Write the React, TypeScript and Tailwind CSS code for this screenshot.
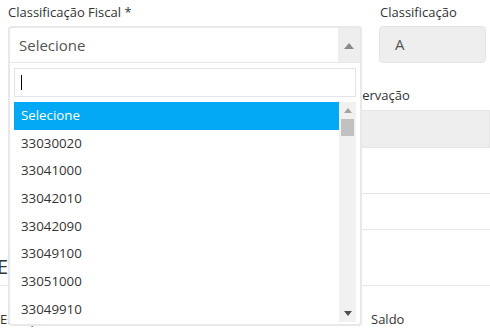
import React from "react";

const options = [
  "Selecione",
  "33030020",
  "33041000",
  "33042010",
  "33042090",
  "33049100",
  "33051000",
  "33049910",
];

export default function App() {
  return (
    <div className="relative w-[490px] h-[333px] overflow-hidden bg-white font-['Open_Sans',sans-serif] text-[#333]">
      {/* Background form */}
      <div className="flex flex-col pt-[3px]">
        {/* Row 1 */}
        <div className="flex pl-2">
          <div className="w-[354px] flex flex-col">
            <div className="h-[18px] leading-[18px] text-[13px] mb-[5px]">Classificação Fiscal *</div>
            <div className="h-[37px] flex border-2 border-b-0 border-[#e6e8eb] rounded-t-[4px] bg-white">
              <div className="flex-1 pl-[9px] flex items-center text-[15px] text-[#555]">Selecione</div>
              <div className="w-[22px] bg-[#eeeeee] flex items-center justify-center">
                <svg width="10" height="6" viewBox="0 0 10 6"><path d="M0 6 L5 0 L10 6 Z" fill="#8a8a8a" /></svg>
              </div>
            </div>
          </div>
          <div className="ml-[17px] w-[107px] flex flex-col">
            <div className="h-[18px] leading-[18px] text-[13px] mb-[5px] pl-px">Classificação</div>
            <div className="h-[37px] rounded-[4px] bg-[#eeeeee] border border-[#e4e4e4] pl-[15px] flex items-center text-[15px] text-[#555]">A</div>
          </div>
        </div>
        {/* Row 2 */}
        <div className="flex mt-[23px]">
          <div className="w-[337px] shrink-0" />
          <div className="flex-1 flex flex-col">
            <div className="h-[18px] leading-[18px] text-[13px] mb-[6px] pl-[1px]">Observação</div>
            <div className="h-[38px] bg-[#eeeeee] border border-[#e4e6e9]" />
            <div className="h-[46px] border-b border-[#e4e6e9]" />
            <div className="h-[36px] border-b border-[#e4e6e9]" />
          </div>
        </div>
        <div className="h-[56px] border-b border-[#e4e6e9] flex items-end pb-[6px]">
          <span className="text-[20px] leading-[24px] -ml-[3px] text-[#333]">Estoque</span>
        </div>
        <div className="flex items-center h-[30px] text-[13px] mt-[19px]">
          <span className="w-[371px] shrink-0">Estoque:</span>
          <span>Saldo</span>
        </div>
      </div>

      {/* Dropdown overlay */}
      <div className="absolute left-2 top-[62px] w-[354px] h-[264px] bg-white border-2 border-t-0 border-[#e6e8eb] rounded-b-[4px] flex flex-col">
        <div className="h-px bg-[#e6e8eb] -mx-[2px]" />
        <div className="px-1 pt-[5px]">
          <div className="h-[29px] border border-[#e2e4e7] flex items-center pl-[6px]">
            <div className="w-px h-[15px] bg-black" />
          </div>
        </div>
        <div className="mx-1 mt-[5px] h-[220px] flex overflow-hidden">
          <div className="flex-1 flex flex-col overflow-hidden">
            {options.map((o, i) => (
              <div
                key={o}
                className={
                  "h-[27.7px] shrink-0 flex items-center pl-[7px] text-[13.3px] " +
                  (i === 0 ? "bg-[#03a9f4] text-white" : "text-[#333]")
                }
              >
                {o}
              </div>
            ))}
          </div>
          <div className="w-[17px] bg-[#f1f1f1] flex flex-col items-center">
            <div className="h-[17px] flex items-center justify-center">
              <svg width="8" height="5" viewBox="0 0 8 5"><path d="M0 5 L4 0 L8 5 Z" fill="#a3a3a3" /></svg>
            </div>
            <div className="w-[13px] h-[17px] bg-[#c1c1c1]" />
            <div className="flex-1" />
            <div className="h-[17px] flex items-center justify-center">
              <svg width="8" height="5" viewBox="0 0 8 5"><path d="M0 0 L4 5 L8 0 Z" fill="#505050" /></svg>
            </div>
          </div>
        </div>
      </div>
    </div>
  );
}
